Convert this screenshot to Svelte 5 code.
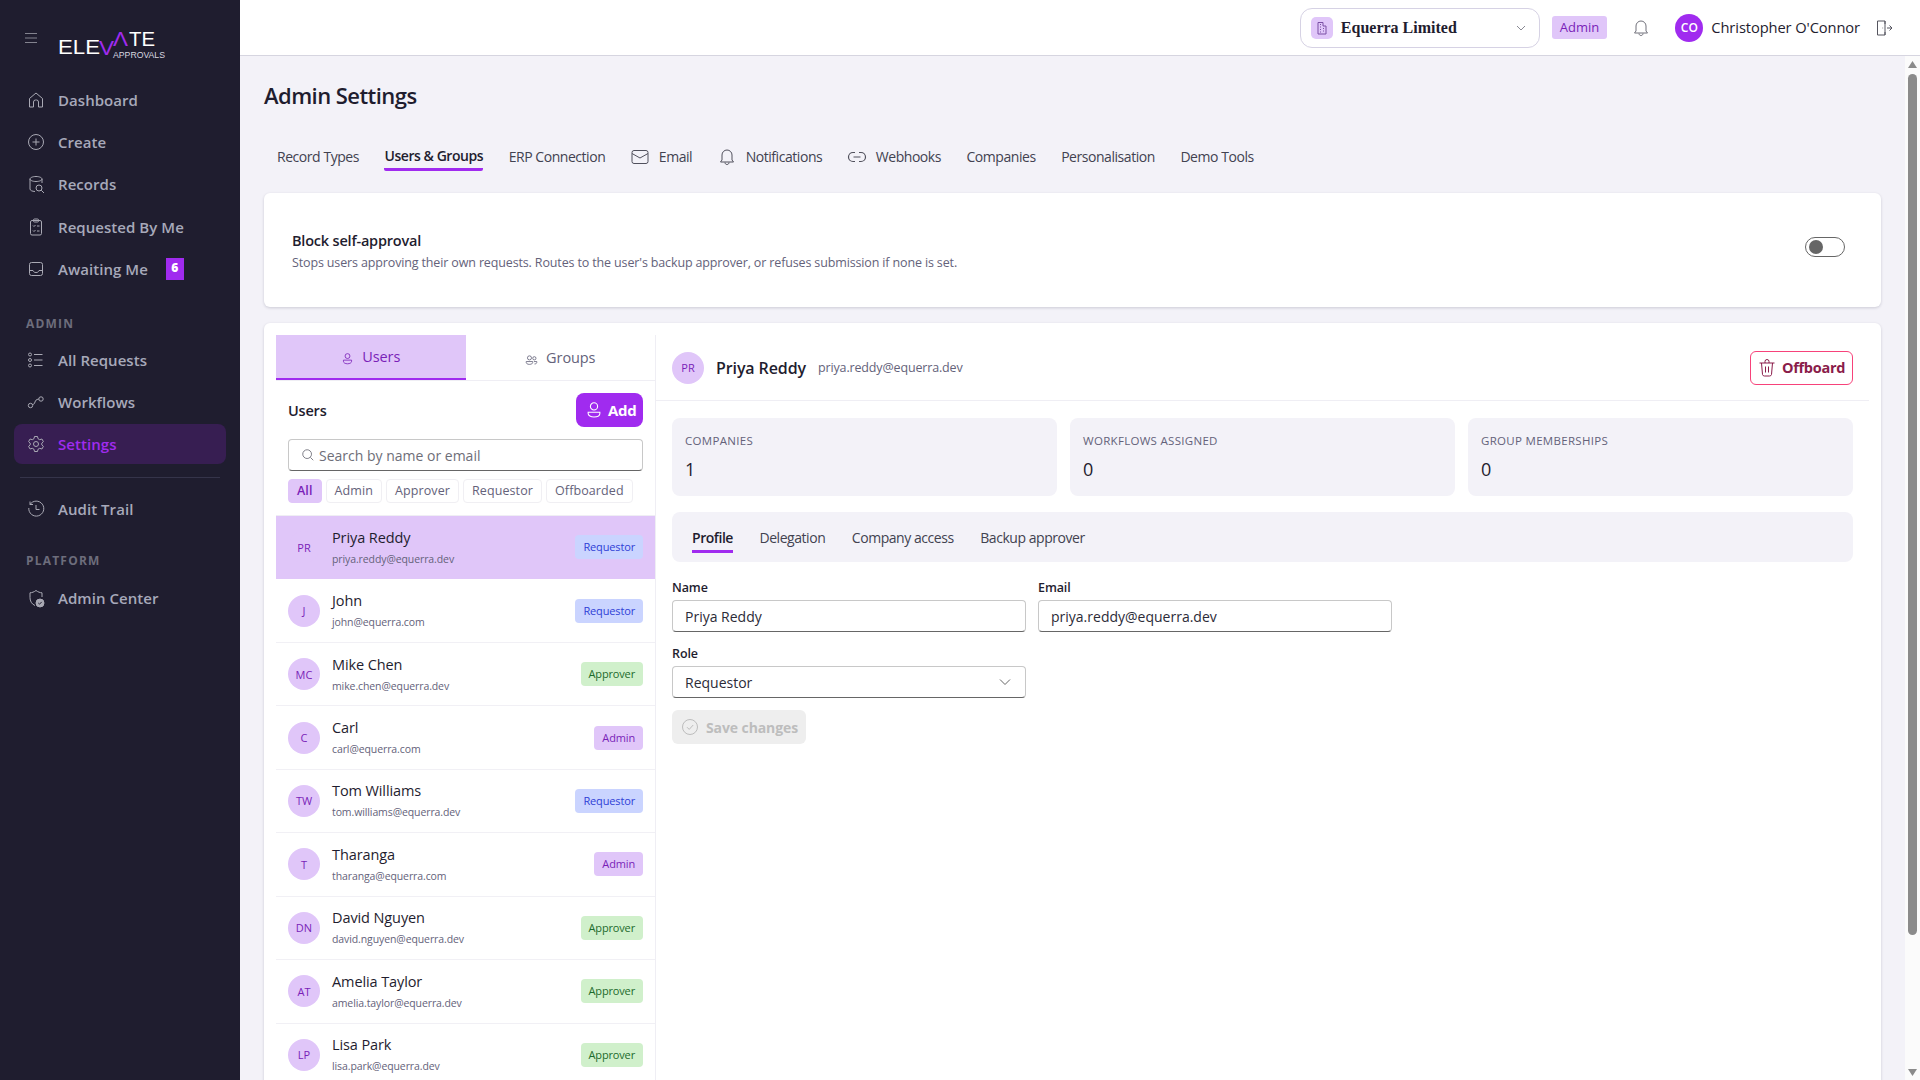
<script lang="ts">
  const nav_main = [
    { label: "Dashboard", icon: "home" },
    { label: "Create", icon: "plus" },
    { label: "Records", icon: "records" },
    { label: "Requested By Me", icon: "clipboard" },
    { label: "Awaiting Me", icon: "inbox", count: 6 },
  ];
  const nav_admin = [
    { label: "All Requests", icon: "list" },
    { label: "Workflows", icon: "flow" },
    { label: "Settings", icon: "gear", active: true },
  ];

  const tabs = [
    { label: "Record Types" },
    { label: "Users & Groups", active: true },
    { label: "ERP Connection" },
    { label: "Email", icon: "mail" },
    { label: "Notifications", icon: "bell" },
    { label: "Webhooks", icon: "link" },
    { label: "Companies" },
    { label: "Personalisation" },
    { label: "Demo Tools" },
  ];

  const filters = ["All", "Admin", "Approver", "Requestor", "Offboarded"];

  const users = [
    { initials: "PR", name: "Priya Reddy", email: "priya.reddy@equerra.dev", role: "Requestor", selected: true },
    { initials: "J", name: "John", email: "john@equerra.com", role: "Requestor" },
    { initials: "MC", name: "Mike Chen", email: "mike.chen@equerra.dev", role: "Approver" },
    { initials: "C", name: "Carl", email: "carl@equerra.com", role: "Admin" },
    { initials: "TW", name: "Tom Williams", email: "tom.williams@equerra.dev", role: "Requestor" },
    { initials: "T", name: "Tharanga", email: "tharanga@equerra.com", role: "Admin" },
    { initials: "DN", name: "David Nguyen", email: "david.nguyen@equerra.dev", role: "Approver" },
    { initials: "AT", name: "Amelia Taylor", email: "amelia.taylor@equerra.dev", role: "Approver" },
    { initials: "LP", name: "Lisa Park", email: "lisa.park@equerra.dev", role: "Approver" },
  ];

  const stats = [
    { label: "Companies", value: 1 },
    { label: "Workflows assigned", value: 0 },
    { label: "Group memberships", value: 0 },
  ];

  const sub_tabs = ["Profile", "Delegation", "Company access", "Backup approver"];
</script>

{#snippet icon(name: string)}
  <svg class="nav-icon" viewBox="0 0 20 20" fill="none" stroke="currentColor" stroke-width="1">
    {#if name === "home"}
      <path d="M3.5 17V8.500L10 3l6.500 5.500V17h-4v-5a2 2 0 0 0-2-2h-1a2 2 0 0 0-2 2v5z" />
    {:else if name === "plus"}
      <circle cx="10" cy="10" r="7.500" /><path d="M10 6.500v7M6.500 10h7" />
    {:else if name === "records"}
      <path d="M16 9V5c0-1.400-2.700-2.500-6-2.500S4 3.600 4 5v10c0 1.400 2.200 2.400 5 2.500" /><path d="M4 5c0 1.400 2.700 2.500 6 2.500S16 6.400 16 5" /><circle cx="13" cy="14" r="3" /><path d="M15.200 16.200 18 19" />
    {:else if name === "clipboard"}
      <rect x="4.500" y="3.500" width="11" height="14.500" rx="1.500" /><rect x="7.500" y="2" width="5" height="3" rx="1" /><path d="M7 8.500l1 1 1.500-1.500M11 9h2.500M7 13.500l1 1 1.500-1.500M11 14h2.500" />
    {:else if name === "inbox"}
      <rect x="3.500" y="3.500" width="13" height="13" rx="2" /><path d="M3.500 11.500H7c.5 1.500 1.500 2 3 2s2.500-.5 3-2h3.500" />
    {:else if name === "list"}
      <circle cx="4" cy="4.500" r="1.500" /><circle cx="4" cy="10" r="1.500" /><circle cx="4" cy="15.500" r="1.500" /><path d="M8 4.500h8.500M8 10h8.500M8 15.500h8.500" />
    {:else if name === "flow"}
      <circle cx="4.500" cy="13.500" r="2.200" /><circle cx="15" cy="7" r="2.200" /><path d="M6.500 12.500c1.500 0 2-1 2.500-2.500s1-2.500 3.800-3" />
    {:else if name === "gear"}
      <circle cx="10" cy="10" r="2.500" /><path d="M8.500 2.500h3l.5 2.200 1.700 1 2.200-.7 1.500 2.600-1.600 1.500v1.800l1.600 1.500-1.500 2.600-2.200-.7-1.700 1-.5 2.200h-3l-.5-2.200-1.700-1-2.200.7-1.500-2.600 1.600-1.500V9.100L2.600 7.600l1.500-2.600 2.200.7 1.700-1z" stroke-linejoin="round" />
    {:else if name === "history"}
      <path d="M4 5.500A7.500 7.500 0 1 1 2.800 9" /><path d="M4 2.500v3h3M10 6v4.500h3.500" />
    {:else if name === "shield"}
      <path d="M10 2.500c2 1.500 4 2.200 6 2.300V9M9 17.500C5.500 16 4 13 4 9.500V4.800c2-.1 4-.8 6-2.300" /><circle cx="14" cy="15" r="4" fill="currentColor" /><path d="M12.300 15l1.200 1.200 2.200-2.300" stroke="#1f1d2f" />
    {/if}
  </svg>
{/snippet}

{#snippet tab_icon(name: string)}
  <svg class="tab-icon" viewBox="0 0 20 20" fill="none" stroke="currentColor" stroke-width="1">
    {#if name === "mail"}
      <rect x="2" y="3.500" width="16" height="13" rx="2" /><path d="M2 6.500 10 11l8-4.500" />
    {:else if name === "bell"}
      <path d="M5 13V8a5 5 0 0 1 10 0v5l1.500 2h-13z" stroke-linejoin="round" /><path d="M8 15.500c0 1.200.8 2 2 2s2-.8 2-2" />
    {:else if name === "link"}
      <path d="M8 5.500H6a4.500 4.500 0 0 0 0 9h2M12 5.500h2a4.500 4.500 0 0 1 0 9h-2M6.500 10h7" stroke-width="1.200" />
    {/if}
  </svg>
{/snippet}

<div class="shell">
  <aside class="sidebar">
    <div class="brand">
      <svg class="burger" viewBox="0 0 14 12" fill="none" stroke="currentColor" stroke-width="1">
        <path d="M1 1.500h12M1 6h12M1 10.500h12" />
      </svg>
      <svg class="logo" viewBox="0 0 108 44" aria-label="Elevate Approvals">
        <text x="0" y="38" class="logo-word" textLength="42" lengthAdjust="spacingAndGlyphs">ELE</text>
        <text x="41" y="39" class="logo-accent" textLength="15" lengthAdjust="spacingAndGlyphs">V</text>
        <text x="55" y="30" class="logo-accent" textLength="15" lengthAdjust="spacingAndGlyphs">Λ</text>
        <text x="71" y="30" class="logo-word" textLength="26" lengthAdjust="spacingAndGlyphs">TE</text>
        <text x="55" y="42" class="logo-sub" textLength="52" lengthAdjust="spacingAndGlyphs">APPROVALS</text>
      </svg>
    </div>

    <nav class="nav">
      {#each nav_main as item}
        <div class="nav-item">
          {@render icon(item.icon)}
          <span>{item.label}</span>
          {#if item.count}<b class="count">{item.count}</b>{/if}
        </div>
      {/each}

      <div class="section">ADMIN</div>
      {#each nav_admin as item}
        <div class="nav-item" class:active={item.active}>
          {@render icon(item.icon)}
          <span>{item.label}</span>
        </div>
      {/each}

      <div class="nav-divider"></div>
      <div class="nav-item">
        {@render icon("history")}
        <span>Audit Trail</span>
      </div>

      <div class="section platform">PLATFORM</div>
      <div class="nav-item">
        {@render icon("shield")}
        <span>Admin Center</span>
      </div>
    </nav>
  </aside>

  <div class="right">
    <header class="topbar">
      <div class="company">
        <span class="company-icon">
          <svg viewBox="0 0 16 16" fill="none" stroke="currentColor" stroke-width="1">
            <path d="M4 14V2.500h5V6h3v8z" /><path d="M6 4.500h1M6 7h1M6 9.500h1M9 8.500h1M9 11h1M6 12h1" />
          </svg>
        </span>
        <span class="company-name">Equerra Limited</span>
        <svg class="chev" viewBox="0 0 12 12" fill="none" stroke="currentColor" stroke-width="1">
          <path d="M2 4l4 4 4-4" />
        </svg>
      </div>
      <span class="role-pill">Admin</span>
      <svg class="bell" viewBox="0 0 20 20" fill="none" stroke="currentColor" stroke-width="1">
        <path d="M5 13V8a5 5 0 0 1 10 0v5l1.500 2h-13z" stroke-linejoin="round" /><path d="M8 15.500c0 1.200.8 2 2 2s2-.8 2-2" />
      </svg>
      <span class="me-avatar">CO</span>
      <span class="me-name">Christopher O'Connor</span>
      <svg class="exit" viewBox="0 0 20 20" fill="none" stroke="currentColor" stroke-width="1">
        <path d="M11 6V3H3.500v14H11v-3" /><path d="M11 3v14M13 10h5M15.500 7.500 18 10l-2.500 2.500M8.500 10h.6" />
      </svg>
    </header>

    <div class="body">
      <main class="main">
        <h1 class="title">Admin Settings</h1>

        <div class="tabs">
          {#each tabs as tab}
            <div class="tab" class:active={tab.active}>
              {#if tab.icon}{@render tab_icon(tab.icon)}{/if}
              <span class="tab-label">{tab.label}</span>
            </div>
          {/each}
        </div>

        <section class="card toggle-card">
          <div>
            <div class="toggle-title">Block self-approval</div>
            <div class="toggle-desc">Stops users approving their own requests. Routes to the user's backup approver, or refuses submission if none is set.</div>
          </div>
          <div class="switch"><span class="knob"></span></div>
        </section>

        <section class="card split">
          <div class="left-pane">
            <div class="pane-tabs">
              <div class="pane-tab active">
                <svg viewBox="0 0 16 16" fill="none" stroke="currentColor" stroke-width="1">
                  <circle cx="8" cy="5" r="3" /><path d="M3 10h10v1.500c0 1.800-2.200 3-5 3s-5-1.200-5-3z" />
                </svg>
                Users
              </div>
              <div class="pane-tab">
                <svg viewBox="0 0 16 16" fill="none" stroke="currentColor" stroke-width="1">
                  <circle cx="5.500" cy="6" r="2.500" /><circle cx="11.500" cy="6.500" r="2" /><path d="M1.500 10.500h8v1c0 1.500-1.500 2.500-4 2.500s-4-1-4-2.500zM11 10.500h3.500v1c0 1.200-1 2-2.800 2" />
                </svg>
                Groups
              </div>
            </div>

            <div class="users-head">
              <span class="users-title">Users</span>
              <button class="add-btn">
                <svg viewBox="0 0 20 20" fill="none" stroke="currentColor" stroke-width="1.200">
                  <circle cx="10" cy="6" r="4" /><path d="M3.500 12.500h13v1.500c0 2.300-2.900 3.800-6.500 3.800s-6.500-1.500-6.500-3.800z" />
                </svg>
                Add
              </button>
            </div>

            <div class="search">
              <svg viewBox="0 0 16 16" fill="none" stroke="currentColor" stroke-width="1">
                <circle cx="7" cy="7" r="5" /><path d="M10.700 10.700 14 14" />
              </svg>
              <span>Search by name or email</span>
            </div>

            <div class="filters">
              {#each filters as filter, i}
                <span class="filter" class:on={i === 0}>{filter}</span>
              {/each}
            </div>

            <div class="user-list">
              {#each users as user}
                <div class="user-row" class:selected={user.selected}>
                  <span class="avatar">{user.initials}</span>
                  <div class="user-text">
                    <div class="user-name">{user.name}</div>
                    <div class="user-mail">{user.email}</div>
                  </div>
                  <span class="badge {user.role.toLowerCase()}">{user.role}</span>
                </div>
              {/each}
            </div>
          </div>

          <div class="detail">
            <div class="detail-head">
              <span class="avatar">PR</span>
              <span class="detail-name">Priya Reddy</span>
              <span class="detail-mail">priya.reddy@equerra.dev</span>
              <button class="offboard">
                <svg viewBox="0 0 20 20" fill="none" stroke="currentColor" stroke-width="1">
                  <path d="M2.500 5h15M8 5V3.500a2 2 0 0 1 4 0V5M4.500 5l1 11.500a2 2 0 0 0 2 1.500h5a2 2 0 0 0 2-1.500l1-11.500M8.500 8.500v6M11.500 8.500v6" />
                </svg>
                Offboard
              </button>
            </div>

            <div class="detail-body">
              <div class="stats">
                {#each stats as stat}
                  <div class="stat">
                    <div class="stat-label">{stat.label}</div>
                    <div class="stat-value">{stat.value}</div>
                  </div>
                {/each}
              </div>

              <div class="sub-tabs">
                {#each sub_tabs as sub, i}
                  <span class="sub-tab" class:active={i === 0}>{sub}</span>
                {/each}
              </div>

              <div class="form">
                <div class="field">
                  <span class="field-label">Name</span>
                  <div class="input">Priya Reddy</div>
                </div>
                <div class="field">
                  <span class="field-label">Email</span>
                  <div class="input">priya.reddy@equerra.dev</div>
                </div>
                <div class="field">
                  <span class="field-label">Role</span>
                  <div class="input select">
                    Requestor
                    <svg viewBox="0 0 12 12" fill="none" stroke="currentColor" stroke-width="1">
                      <path d="M1 3.500l5 5 5-5" />
                    </svg>
                  </div>
                </div>
              </div>

              <button class="save">
                <svg viewBox="0 0 20 20" fill="none" stroke="currentColor" stroke-width="1">
                  <circle cx="10" cy="10" r="7.500" /><path d="M7 10.200l2.200 2.200L13.200 8" />
                </svg>
                Save changes
              </button>
            </div>
          </div>
        </section>
      </main>

      <!-- page scrollbar, headless shots hide the native one -->
      <div class="scrollbar">
        <svg viewBox="0 0 9 7"><path d="M4.500 0 9 7H0z" /></svg>
        <div class="thumb"></div>
        <svg class="down" viewBox="0 0 9 7"><path d="M0 0h9L4.500 7z" /></svg>
      </div>
    </div>
  </div>
</div>

<style>
  :global(body) {
    margin: 0;
    font-family: "Open Sans", "Noto Sans", sans-serif;
    color: #1f1d2f;
  }

  .shell {
    display: flex;
    height: 100vh;
    overflow: hidden;
    background: #f3f2f8;
  }

  /* ── Sidebar ── */
  .sidebar {
    width: 240px;
    flex: none;
    background: #1f1d2f;
    color: #a7a9ba;
  }

  .brand {
    display: flex;
    align-items: center;
    height: 76px;
    padding-left: 24px;
    gap: 20px;
    box-sizing: border-box;
  }

  .burger {
    width: 14px;
    height: 12px;
    color: #83838f;
  }

  .logo {
    width: 108px;
    height: 44px;
  }
  .logo-word {
    font: 400 21px "Liberation Sans", sans-serif;
    fill: #fff;
  }
  .logo-accent {
    font: 400 21px "Liberation Sans", sans-serif;
    fill: #a02bef;
  }
  .logo-sub {
    font: 400 8.5px "Liberation Sans", sans-serif;
    fill: #d8d8e0;
  }

  .nav {
    display: flex;
    flex-direction: column;
    padding: 4px 14px 0;
  }

  .nav-item {
    display: flex;
    align-items: center;
    height: 40px;
    margin-bottom: 2.2px;
    padding-left: 12px;
    gap: 12px;
    border-radius: 8px;
    font-size: 15px;
    font-weight: 600;
    letter-spacing: 0.05px;
  }

  .nav-icon {
    width: 20px;
    height: 20px;
    flex: none;
    color: #a9a9b4;
  }

  .nav-item.active {
    background: #371e52;
    color: #a02bef;
  }

  .count {
    width: 18px;
    height: 22px;
    margin-left: 6px;
    background: #a02bef;
    color: #fff;
    font-size: 12px;
    text-align: center;
    line-height: 20px;
  }

  .section {
    padding: 25px 12px 8px;
    height: 16px;
    font-size: 12px;
    font-weight: 700;
    letter-spacing: 1.2px;
    line-height: 16px;
    color: #6d6d7c;
  }
  .platform {
    padding-top: 22px;
    padding-bottom: 9px;
  }

  .nav-divider {
    height: 1px;
    margin: 10px 6px 11px;
    background: #35344a;
  }

  /* ── Top bar ── */
  .right {
    flex: 1;
    min-width: 0;
    display: flex;
    flex-direction: column;
  }

  .topbar {
    flex: none;
    display: flex;
    align-items: center;
    justify-content: flex-end;
    height: 56px;
    box-sizing: border-box;
    padding-right: 26px;
    background: #fff;
    border-bottom: 1px solid #d6d5e0;
  }

  .company {
    display: flex;
    align-items: center;
    width: 240px;
    height: 40px;
    box-sizing: border-box;
    padding: 0 12px 0 10px;
    border: 1px solid #d6d2e4;
    border-radius: 12px;
  }

  .company-icon {
    display: grid;
    place-items: center;
    width: 22px;
    height: 22px;
    border-radius: 5px;
    background: #e0c6f9;
    color: #7a4fa5;
  }
  .company-icon svg {
    width: 16px;
    height: 16px;
  }

  .company-name {
    flex: 1;
    margin-left: 8px;
    font: 700 16px "Liberation Serif", serif;
  }

  .chev {
    width: 12px;
    height: 12px;
    color: #8a8a94;
  }

  .role-pill {
    margin-left: 12px;
    padding: 0 8px;
    height: 23px;
    line-height: 23px;
    border-radius: 3px;
    background: #e0c6f9;
    color: #7a1fb8;
    font-size: 13px;
    font-weight: 500;
  }

  .bell {
    width: 20px;
    height: 20px;
    margin-left: 24px;
    color: #70707a;
  }

  .me-avatar {
    display: grid;
    place-items: center;
    width: 28px;
    height: 28px;
    margin-left: 24px;
    border-radius: 50%;
    background: #a02bef;
    color: #fff;
    font-size: 12px;
    font-weight: 600;
  }

  .me-name {
    margin-left: 8px;
    margin-top: -1px;
    font-size: 14.7px;
    letter-spacing: -0.1px;
  }

  .exit {
    width: 20px;
    height: 20px;
    margin-left: 14px;
    color: #55555f;
  }

  /* ── Main ── */
  .body {
    flex: 1;
    min-height: 0;
    display: flex;
  }

  .main {
    flex: 1;
    min-width: 0;
    overflow: hidden;
    box-sizing: border-box;
    padding: 0 24px;
  }

  .scrollbar {
    flex: none;
    width: 15px;
    display: flex;
    flex-direction: column;
    align-items: center;
    background: #fbfbfb;
    padding-top: 5px;
    box-sizing: border-box;
  }
  .scrollbar svg {
    flex: none;
    width: 9px;
    height: 7px;
    fill: #8b8b8b;
  }
  .scrollbar .down {
    margin-top: 134px;
  }
  .thumb {
    flex: none;
    width: 9px;
    height: 861px;
    margin-top: 6px;
    border-radius: 5px;
    background: #8b8b8b;
  }

  .title {
    margin: 0;
    padding-top: 23px;
    font-size: 22px;
    font-weight: 600;
    line-height: 32px;
    letter-spacing: -0.55px;
  }

  .tabs {
    display: flex;
    margin-top: 31px;
    height: 49px;
    padding-left: 13px;
    gap: 25.5px;
  }

  .tab {
    display: flex;
    align-items: center;
    height: 24px;
    margin-top: 3px;
    gap: 9px;
    font-size: 14px;
    letter-spacing: -0.45px;
    color: #424250;
  }

  .tab-label {
    height: 24px;
    line-height: 24px;
  }

  .tab.active .tab-label {
    color: #1f1d2f;
    font-weight: 600;
    border-bottom: 3px solid #a02bef;
    border-radius: 0 0 2px 2px;
  }

  .tab-icon {
    width: 20px;
    height: 20px;
    margin-left: -1px;
    color: #50505c;
  }

  .card {
    background: #fff;
    border-radius: 6px;
    box-shadow: 0 1px 3px rgba(30, 25, 60, 0.18);
  }

  .toggle-card {
    display: flex;
    align-items: center;
    justify-content: space-between;
    height: 114px;
    margin-top: 2px;
    box-sizing: border-box;
    padding: 2px 36px 0 28px;
  }

  .toggle-title {
    font-size: 14.5px;
    font-weight: 600;
    line-height: 20px;
    letter-spacing: -0.2px;
  }

  .toggle-desc {
    margin-top: 3px;
    font-size: 12.5px;
    line-height: 18px;
    letter-spacing: -0.14px;
    color: #64627a;
  }

  .switch {
    display: flex;
    align-items: center;
    width: 40px;
    height: 20px;
    margin-bottom: 8px;
    box-sizing: border-box;
    padding-left: 3px;
    border: 1px solid #666;
    border-radius: 10px;
  }

  .knob {
    width: 14px;
    height: 14px;
    border-radius: 50%;
    background: #666;
  }

  .split {
    display: flex;
    margin-top: 16px;
    min-height: 800px;
    box-sizing: border-box;
    padding: 12px;
  }

  /* ── Left pane ── */
  .left-pane {
    width: 380px;
    flex: none;
    box-sizing: border-box;
    border-right: 1px solid #efeef4;
  }

  .pane-tabs {
    display: flex;
    height: 45px;
    border-bottom: 1px solid #efeef4;
  }

  .pane-tab {
    flex: 1;
    display: flex;
    align-items: center;
    justify-content: center;
    gap: 8px;
    height: 45px;
    box-sizing: border-box;
    font-size: 14.5px;
    letter-spacing: -0.1px;
    color: #64627a;
  }

  .pane-tab svg {
    width: 13px;
    height: 13px;
    margin-top: 3px;
  }

  .pane-tab.active {
    background: #e0c6f9;
    color: #7a1fb8;
    border-bottom: 2px solid #a02bef;
  }

  .users-head {
    display: flex;
    align-items: center;
    justify-content: space-between;
    height: 34px;
    padding: 12px 12px 0;
  }

  .users-title {
    font-size: 14.5px;
    font-weight: 600;
    letter-spacing: -0.2px;
  }

  .add-btn {
    display: flex;
    align-items: center;
    gap: 5px;
    width: 67px;
    height: 34px;
    box-sizing: border-box;
    padding: 0 0 0 9px;
    border: 0;
    border-radius: 8px;
    background: #a02bef;
    color: #fff;
    font: 700 15px "Open Sans", sans-serif;
    letter-spacing: -0.3px;
  }
  .add-btn svg {
    width: 18px;
    height: 18px;
  }

  .search {
    display: flex;
    align-items: center;
    gap: 4px;
    height: 32px;
    box-sizing: border-box;
    margin: 12px 12px 0;
    padding-left: 12px;
    border: 1px solid #c8c8c8;
    border-bottom-color: #666;
    border-radius: 4px;
    font-size: 14px;
    color: #6e6e78;
  }
  .search svg {
    width: 14px;
    height: 14px;
    flex: none;
  }

  .filters {
    display: flex;
    gap: 4px;
    margin: 8px 12px 0;
    height: 36px;
  }

  .filter {
    display: block;
    height: 24px;
    line-height: 22px;
    box-sizing: border-box;
    padding: 0 8px;
    border: 1px solid #f0eff3;
    border-radius: 4px;
    font-size: 12.5px;
    letter-spacing: 0.1px;
    color: #64627a;
  }
  .filter.on {
    background: #e0c6f9;
    border-color: #e0c6f9;
    color: #7a1fb8;
    font-weight: 600;
  }

  .user-list {
    border-top: 1px solid #efeef4;
  }

  .user-row {
    display: flex;
    align-items: center;
    height: 63.45px;
    box-sizing: border-box;
    padding: 0 12px;
    border-bottom: 1px solid #f1f0f5;
  }
  .user-row.selected {
    background: #e0c6f9;
    border-bottom-color: #e0c6f9;
  }

  .avatar {
    display: grid;
    place-items: center;
    flex: none;
    width: 32px;
    height: 32px;
    border-radius: 50%;
    background: #e0c6f9;
    color: #7a1fb8;
    font-size: 11px;
    font-weight: 500;
  }

  .user-text {
    flex: 1;
    min-width: 0;
    margin-left: 12px;
  }

  .user-name {
    font-size: 14.5px;
    font-weight: 500;
    line-height: 20px;
    letter-spacing: -0.1px;
  }

  .user-mail {
    margin-top: 3px;
    font-size: 10.5px;
    line-height: 16px;
    letter-spacing: -0.1px;
    color: #64627a;
  }

  .badge {
    height: 24px;
    line-height: 24px;
    padding: 0 8px;
    border-radius: 4px;
    font-size: 11px;
    letter-spacing: -0.15px;
  }
  .badge.requestor {
    background: #cad4ff;
    color: #2f3fd6;
  }
  .badge.approver {
    background: #d0f0cb;
    color: #1d6b2c;
  }
  .badge.admin {
    background: #e0c6f9;
    color: #7a1fb8;
  }

  /* ── Detail pane ── */
  .detail {
    flex: 1;
    min-width: 0;
  }

  .detail-head {
    display: flex;
    align-items: center;
    height: 66px;
    box-sizing: border-box;
    padding: 0 16px;
    border-bottom: 1px solid #efeef4;
  }

  .detail-name {
    margin-left: 12px;
    font-size: 16px;
    font-weight: 600;
    letter-spacing: -0.1px;
  }

  .detail-mail {
    margin-left: 12px;
    font-size: 12.5px;
    letter-spacing: -0.15px;
    color: #64627a;
  }

  .offboard {
    display: flex;
    align-items: center;
    gap: 5px;
    margin-left: auto;
    height: 34px;
    width: 103px;
    box-sizing: border-box;
    padding: 0 0 0 6px;
    border: 1px solid #f7427a;
    border-radius: 6px;
    background: #fff;
    color: #8a1c4a;
    font: 700 14.5px "Open Sans", sans-serif;
    letter-spacing: -0.3px;
  }
  .offboard svg {
    width: 20px;
    height: 20px;
  }

  .detail-body {
    padding: 17px 16px 0;
  }

  .stats {
    display: flex;
    gap: 13px;
  }

  .stat {
    flex: 1;
    height: 78px;
    box-sizing: border-box;
    padding: 13px 13px;
    border-radius: 8px;
    background: #f3f2f8;
  }

  .stat-label {
    font-size: 11.5px;
    line-height: 20px;
    text-transform: uppercase;
    letter-spacing: 0.3px;
    color: #64627a;
  }

  .stat-value {
    margin-top: 6px;
    font-size: 18px;
    line-height: 24px;
  }

  .sub-tabs {
    display: flex;
    align-items: center;
    gap: 26.5px;
    height: 50px;
    box-sizing: border-box;
    margin-top: 16px;
    padding: 1px 0 0 20px;
    border-radius: 8px;
    background: #f3f2f8;
  }

  .sub-tab {
    font-size: 14px;
    line-height: 24px;
    letter-spacing: -0.45px;
    color: #424250;
  }
  .sub-tab.active {
    color: #1f1d2f;
    font-weight: 600;
    box-shadow: 0 3px 0 #a02bef;
  }

  .form {
    display: grid;
    grid-template-columns: 354px 354px;
    gap: 12px;
    margin-top: 16px;
  }

  .field-label {
    display: block;
    height: 22px;
    font-size: 12.5px;
    font-weight: 600;
    line-height: 20px;
    letter-spacing: -0.1px;
  }

  .input {
    display: flex;
    align-items: center;
    height: 32px;
    box-sizing: border-box;
    padding: 0 12px;
    border: 1px solid #c8c8c8;
    border-bottom-color: #666;
    border-radius: 4px;
    font-size: 14px;
    color: #2c2b38;
  }

  .select {
    justify-content: space-between;
    padding-right: 14px;
  }
  .select svg {
    width: 12px;
    height: 12px;
    color: #666;
  }

  .save {
    display: flex;
    align-items: center;
    gap: 6px;
    width: 134px;
    height: 34px;
    margin-top: 12px;
    box-sizing: border-box;
    padding: 0 0 0 8px;
    border: 0;
    border-radius: 6px;
    background: #eeeeee;
    color: #bdbdbd;
    font: 700 14px "Open Sans", sans-serif;
    letter-spacing: -0.1px;
  }
  .save svg {
    width: 20px;
    height: 20px;
  }
</style>
